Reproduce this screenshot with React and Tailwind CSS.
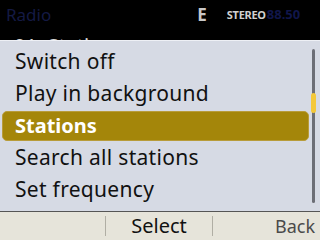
import React from "react";

const items = ["Switch off", "Play in background", "Stations", "Search all stations", "Set frequency"];

export default function App() {
  return (
    <div className="w-[320px] h-[240px] bg-black overflow-hidden flex flex-col" style={{ fontFamily: '"Noto Sans", "Open Sans", sans-serif' }}>
      <div className="h-[40px] overflow-hidden">
        <div className="flex items-center h-[28px] pl-[6px]">
          <span className="text-[17px] text-[#141a44] leading-none">Radio</span>
          <span className="ml-[146px] text-[17px] font-bold text-[#c8c8c8] leading-none">E</span>
          <span className="ml-[20px] text-[11px] font-bold text-[#d0d0d0] leading-none tracking-tight">STEREO</span>
          <span className="ml-[1px] text-[13px] font-bold text-[#10164a] leading-none">88.50</span>
        </div>
        <div className="pl-[14px] pt-[8px] text-[20px] text-[#d8d8d8] leading-none">01. Station</div>
      </div>
      <div className="h-[171px] bg-[#d6dae4] border-t border-[#eef0f5] relative pt-[5px]">
        {items.map((t, i) =>
          i === 2 ? (
            <div key={t} className="h-[32px] py-[1px] pl-[2px] pr-[11px]">
              <div className="h-full rounded-[5px] bg-[#a4860a] border border-[#b89c3a] flex items-center pl-[12px] text-[20px] font-bold text-white">
                {t}
              </div>
            </div>
          ) : (
            <div key={t} className="h-[32px] flex items-center pl-[15px] text-[21px] tracking-[0.3px] text-[#111]">
              {t}
            </div>
          )
        )}
        <div className="absolute right-[5px] top-[8px] bottom-[8px] w-[3px] bg-[#6c6e76] rounded-full">
          <div className="absolute top-[44px] left-[-1px] w-[5px] h-[20px] bg-[#f4c83a] rounded-sm" />
        </div>
      </div>
      <div className="flex-1 bg-[#e6e4da] border-t border-[#555] flex items-center">
        <div className="w-[106px] h-[20px] border-r border-[#b0aea4]" />
        <div className="w-[107px] h-[20px] border-r border-[#b0aea4] flex items-center justify-center text-[20px] text-[#111] leading-none">Select</div>
        <div className="flex-1 flex justify-end pr-[5px] text-[18px] text-[#4a4a4a] leading-none">Back</div>
      </div>
    </div>
  );
}
